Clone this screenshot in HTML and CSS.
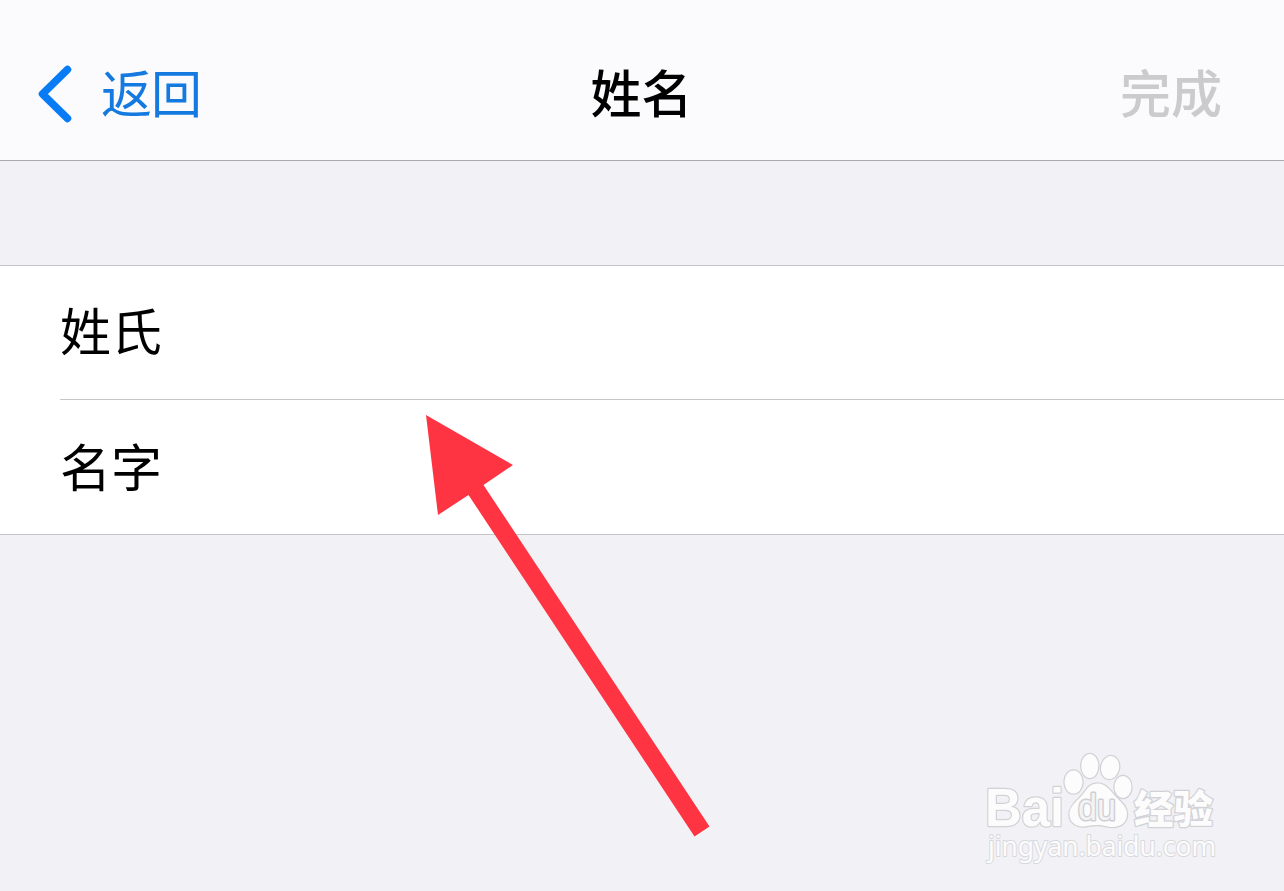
FILE: index.html
```html
<!DOCTYPE html>
<html lang="zh-CN">
<head>
<meta charset="utf-8">
<title>姓名</title>
<link rel="stylesheet" href="styles.css">
</head>
<body>
<main class="screen">
  <header class="navbar">
    <a class="back">
      <svg class="chevron" width="36" height="60" viewBox="0 0 36 60"><path d="M31.500 5.500 6.500 30 31.500 54.500"/></svg>
      <span class="label">返回</span>
    </a>
    <h1 class="title">姓名</h1>
    <span class="done">完成</span>
  </header>
  <section class="form">
    <div class="row"><span>姓氏</span></div>
    <div class="row last"><span>名字</span></div>
  </section>
  <svg class="arrow" width="1284" height="891" viewBox="0 0 1284 891"><path d="M426 415 513 465 483.500 485 709.500 826.500 694.500 836.500 468.500 495 438 515Z"/></svg>
  <svg class="watermark" width="250" height="120" viewBox="980 750 250 120">
    <g class="mark">
      <ellipse cx="1073.500" cy="782" rx="9" ry="11.500"/>
      <ellipse cx="1089.800" cy="766" rx="8.500" ry="12"/>
      <ellipse cx="1110.200" cy="767.500" rx="9" ry="11.500" transform="rotate(10 1110 767)"/>
      <ellipse cx="1123" cy="787" rx="8.500" ry="11"/>
      <path d="M1097 783.500C1088 783.500 1086 792 1080 797.500C1073 804 1069 809 1069.500 815C1070 823 1077 827 1084 826.500C1089 826 1092 825 1098 825C1104 825 1107 827 1113 827C1121 827 1127 822 1127 814C1127 807 1122 803 1116 797C1110 791 1107 783.500 1097 783.500Z"/>
      <text class="brand" x="985" y="825.500" textLength="79" lengthAdjust="spacingAndGlyphs">Bai</text>
      <text class="du" x="1078" y="820" textLength="38" lengthAdjust="spacingAndGlyphs">du</text>
      <text class="cn" x="1134" y="823" textLength="79" lengthAdjust="spacingAndGlyphs">经验</text>
      <text class="url" x="988" y="856" textLength="228" lengthAdjust="spacingAndGlyphs">jingyan.baidu.com</text>
    </g>
  </svg>
</main>
</body>
</html>
```
FILE: styles.css
```css
* { box-sizing: border-box; }
body { margin: 0; }
.screen {
  position: relative;
  width: 1284px;
  height: 891px;
  overflow: hidden;
  background: #f1f1f6;
  color: #000;
  font: 400 51px/74px "Noto Sans CJK SC", sans-serif;
}
.navbar {
  display: grid;
  grid-template-columns: 1fr auto 1fr;
  align-items: center;
  height: 161px;
  padding: 27px 62px 0 36px;
  background: #fbfbfd;
  border-bottom: 1px solid #a9a9ad;
}
.back { display: flex; align-items: center; gap: 29px; color: #147ae0; }
.label, .title, .done { padding-bottom: 5px; }
.label { letter-spacing: -1px; }
.chevron { fill: none; stroke: #087cf5; stroke-width: 7.500; stroke-linecap: round; stroke-linejoin: round; }
.title { margin: 0 0 0 25px; font: inherit; font-weight: 500; }
.done { justify-self: end; color: #cbcbcd; font-weight: 500; }
.form {
  margin-top: 104px;
  height: 270px;
  padding-left: 60px;
  background: #fff;
  border-top: 1px solid #c6c6c9;
  border-bottom: 1px solid #c6c6c9;
}
.row { display: flex; align-items: center; height: 134px; padding-bottom: 7px; border-bottom: 1px solid #c6c6c9; }
.row.last { padding-bottom: 5px; border-bottom: 0; }
.arrow { position: absolute; left: 0; top: 0; fill: #fe3443; }
.watermark { position: absolute; left: 980px; top: 750px; }
.mark { fill: #fcfcfd; stroke: #d2d2d6; stroke-width: 2.500; paint-order: stroke; stroke-linejoin: round; }
.brand { font: 700 53px "Liberation Sans", sans-serif; }
.du { font: 400 36px "Liberation Sans", sans-serif; fill: #f3f3f5; stroke: #cfcfd3; stroke-width: 3; }
.cn { font: 900 39px "Noto Sans CJK SC", sans-serif; }
.url { font: 400 28px "Noto Sans", sans-serif; stroke: #d8d8dc; stroke-width: 2; }
```
